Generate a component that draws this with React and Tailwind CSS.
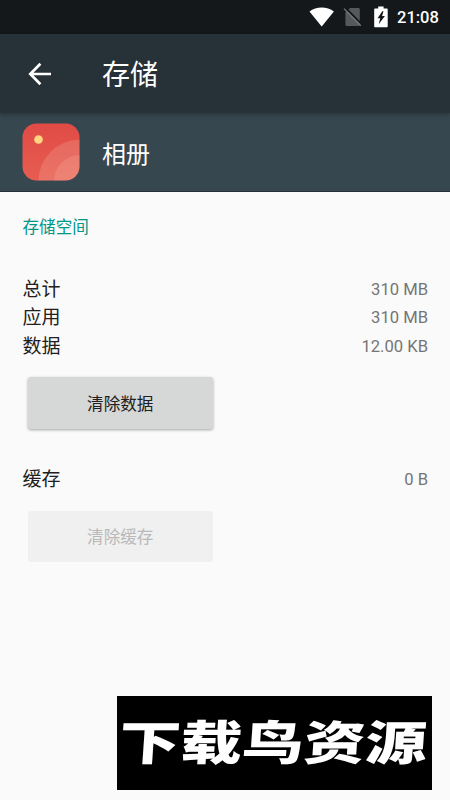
import React from 'react';

const WifiIcon = () => (
  <svg width="25" height="20" viewBox="0 0 25 20" className="ml-[309px]" fill="#fff">
    <path d="M12.7 19.6 0.5 4.4C7 -0.7 18.3 -0.7 24.9 4.4Z" />
  </svg>
);

const NoSimIcon = () => (
  <svg width="19" height="20" viewBox="0 0 19 20" className="ml-[9px]">
    <path d="M7 1h8.4c.8 0 1.4.6 1.4 1.4V18c0 .5-.6 1-1.2 1H3.8c-.8 0-1.4-.6-1.4-1.4V5.6Z" fill="#55595b" />
    <path d="M2.2.8 19 17.6" stroke="#14181b" strokeWidth="2" />
    <path d="M1 1.6 17.8 18.8" stroke="#777b7d" strokeWidth="1.3" />
  </svg>
);

const BatteryIcon = () => (
  <svg width="14" height="22" viewBox="0 0 14 22" className="ml-[12px]">
    <path d="M4.2.6h5.4v2h3.4c.4 0 .7.3.7.7V20.600c0 .4-.3.7-.7.7H.9c-.4 0-.7-.3-.7-.7V3.300c0-.4.3-.7.7-.7h3.300Z" fill="#fff" />
    <path d="M8.300 5.200 3.500 12.300h2.700L4.700 18.300l6.200-8.200H8.100l1.400-4.900Z" fill="#14181b" />
  </svg>
);

const StatusBar = () => (
  <div className="flex h-[34px] items-center bg-[#14181b]">
    <WifiIcon />
    <NoSimIcon />
    <BatteryIcon />
    <span className="ml-[9px] pt-px text-[16.5px] leading-5 font-medium text-white">21:08</span>
  </div>
);

const AppIcon = () => (
  <svg width="58" height="58" viewBox="0 0 58 58">
    <defs>
      <linearGradient id="tile" x1="0" y1="0" x2="0" y2="1">
        <stop offset="0" stopColor="#e04b45" />
        <stop offset="1" stopColor="#e75d52" />
      </linearGradient>
      <clipPath id="tileClip">
        <rect x="0.5" y="0.5" width="57" height="57" rx="14" />
      </clipPath>
    </defs>
    <g clipPath="url(#tileClip)">
      <rect width="58" height="58" fill="url(#tile)" />
      <circle cx="58" cy="58" r="41.5" fill="#ffe0cc" fillOpacity="0.17" />
      <circle cx="58" cy="58" r="26" fill="#ffe0cc" fillOpacity="0.14" />
    </g>
    <circle cx="16.5" cy="16.5" r="4.3" fill="#ffd67f" />
  </svg>
);

const Row = ({ label, value }) => (
  <div className="flex h-[28.3px] items-center justify-between">
    <span className="text-[19px] leading-7 text-[#202020]">{label}</span>
    <span className="text-[16.6px] leading-7 text-[#757575]">{value}</span>
  </div>
);

export default function App() {
  return (
    <div className="flex h-[800px] w-[450px] flex-col overflow-hidden bg-[#fafafa] font-[Roboto,'Noto_Sans_CJK_SC',sans-serif]">
      <StatusBar />

      <header className="relative z-10 flex h-[79px] items-center bg-[#273238] shadow-[0_2px_4px_rgba(0,0,0,0.25)]">
        <svg width="24" height="24" viewBox="0 0 24 24" className="ml-7" fill="none" stroke="#fff" strokeWidth="2.7">
          <path d="M23 12H3M12.4 1.8 2.3 12 12.4 22.2" />
        </svg>
        <h1 className="ml-[50px] pt-[4px] text-[28px] leading-9 text-white">存储</h1>
      </header>

      <div className="flex h-[79px] items-center border-b border-[#263238] bg-[#37474f] pl-[22px]">
        <AppIcon />
        <h2 className="ml-[22px] pt-[5px] text-[24px] leading-8 text-white">相册</h2>
      </div>

      <main className="flex flex-col pr-[22px] pl-[22.5px]">
        <h3 className="mt-6 text-[16.6px] leading-6 text-[#009688]">存储空间</h3>

        <div className="mt-9">
          <Row label="总计" value="310 MB" />
          <Row label="应用" value="310 MB" />
          <Row label="数据" value="12.00 KB" />
        </div>

        <button className="mt-4 ml-[5.5px] h-[52px] w-[184.5px] rounded-[3px] bg-[#d6d7d7] pt-[5px] text-[16.6px] text-[#202020] shadow-[0_1px_3px_rgba(0,0,0,0.35)]">
          清除数据
        </button>

        <div className="mt-[37px]">
          <Row label="缓存" value="0 B" />
        </div>

        <button disabled className="mt-[17px] ml-[5.5px] h-[51px] w-[184.5px] rounded-[3px] bg-[#f0f0f0] pt-1 text-[16.6px] text-[#b9b9b9]">
          清除缓存
        </button>
      </main>

      <div className="mt-auto mr-[18px] mb-[10px] flex h-[94px] w-[315px] items-center justify-center self-end bg-black">
        <span className="-skew-x-3 scale-x-[1.31] pr-[3px] text-[47px] leading-none font-black whitespace-nowrap text-white">下载鸟资源</span>
      </div>
    </div>
  );
}
